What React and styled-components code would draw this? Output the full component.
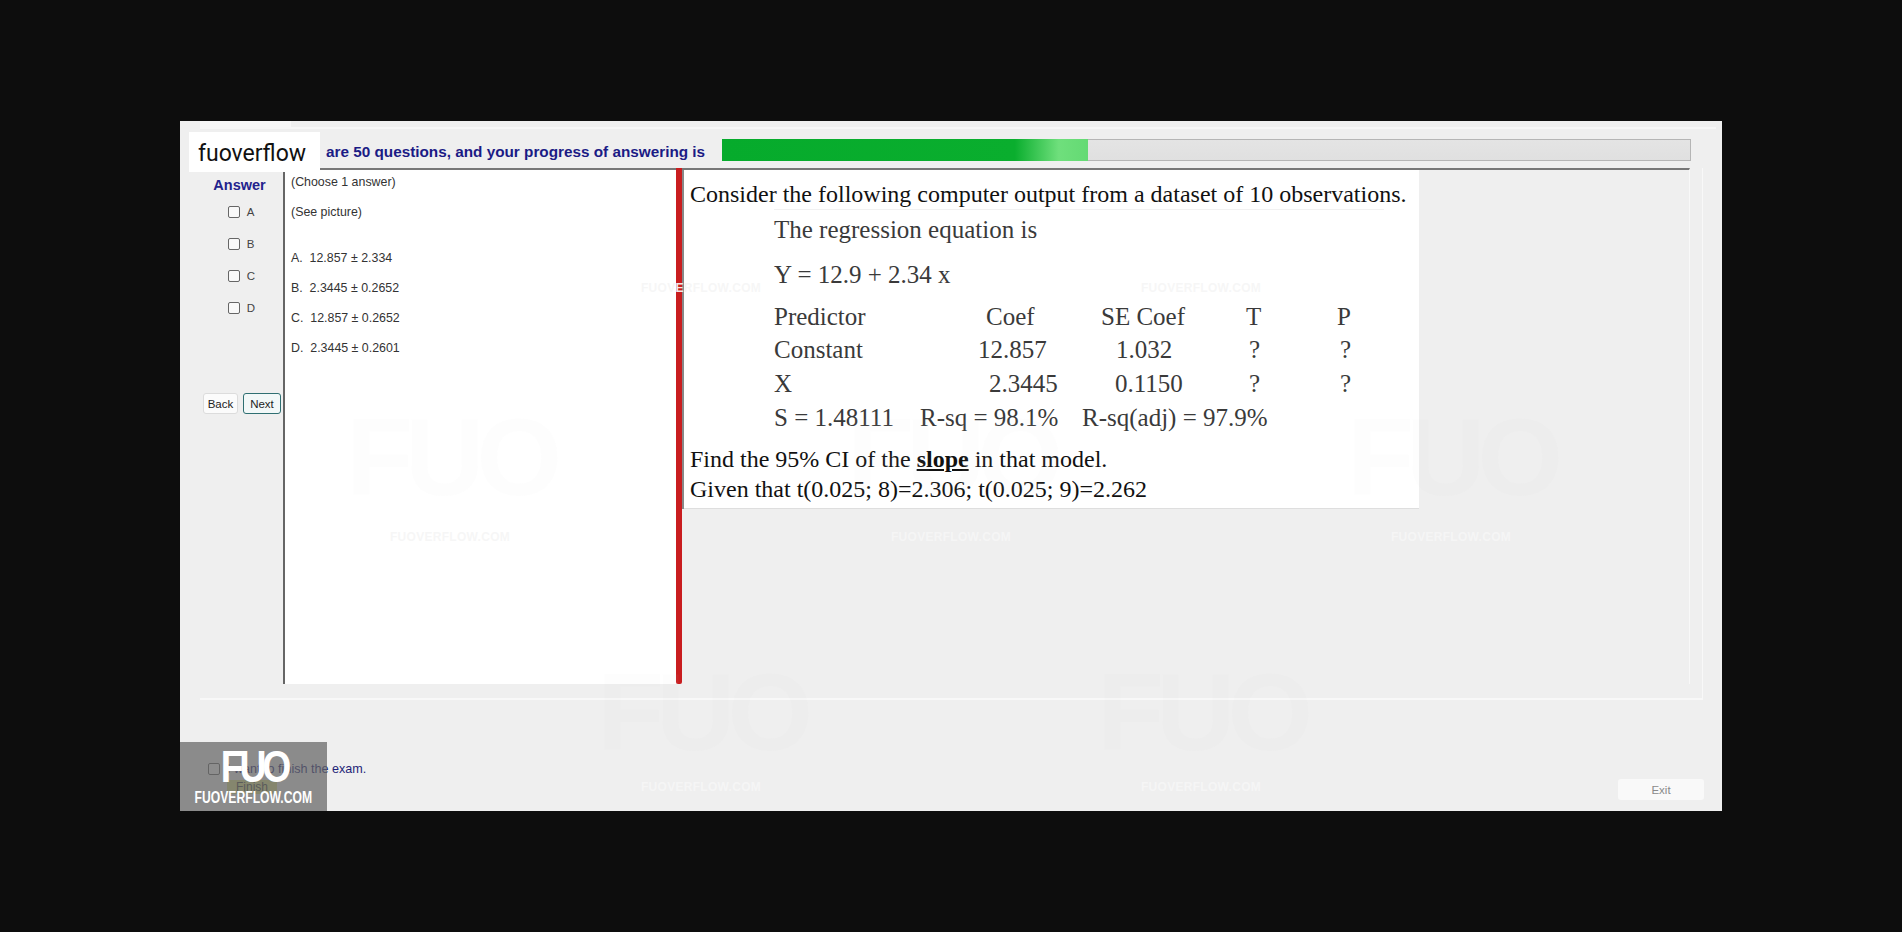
import React from "react";
import styled, { createGlobalStyle } from "styled-components";

const GlobalStyle = createGlobalStyle`
  html, body {
    margin: 0;
    padding: 0;
    background: #0d0d0d;
  }
`;

const Page = styled.div`
  width: 1902px;
  height: 932px;
  overflow: hidden;
  display: flex;
  align-items: center;
  justify-content: center;
  background: #0d0d0d;
  font-family: "Liberation Sans", Arial, sans-serif;
`;

const Window = styled.div`
  position: relative;
  width: 1542px;
  height: 690px;
  box-sizing: border-box;
  display: flex;
  flex-direction: column;
  background: #efefef;
  overflow: hidden;
`;

const TabStrip = styled.div`
  height: 8px;
  margin-left: 20px;
  flex-shrink: 0;
  display: flex;
  align-items: flex-end;
`;

const Tab = styled.div`
  width: 91px;
  height: 8px;
  background: #f7f7f7;
`;

const TabLine = styled.div`
  flex: 1;
  height: 2px;
  margin-right: 6px;
  background: #f7f7f7;
`;

const Header = styled.div`
  display: flex;
  align-items: center;
  height: 22px;
  margin-top: 10px;
  margin-right: 31px;
  padding-left: 146px;
`;

const HeaderText = styled.div`
  width: 396px;
  padding-top: 4px;
  font-size: 15.3px;
  font-weight: 700;
  color: #1b1b85;
  white-space: nowrap;
`;

const ProgressTrack = styled.div`
  flex: 1;
  height: 22px;
  box-sizing: border-box;
  border: 1px solid #b5b5b5;
  border-left: none;
  background: linear-gradient(#e4e4e4, #e0e0e0);
`;

const ProgressFill = styled.div`
  height: 22px;
  margin-top: -1px;
  background: linear-gradient(90deg, #06ab2c 0%, #0aae2e 80%, #6fdf7c 92%, #64da74 100%);
`;

const GroupBox = styled.div`
  display: flex;
  margin: 7px 19px 0 20px;
  padding-right: 12px;
  padding-bottom: 14px;
  height: 516px;
  border-right: 1px solid #f8f8f8;
  border-bottom: 2px solid #f8f8f8;
`;

const AnswerColumn = styled.div`
  width: 83px;
  flex-shrink: 0;
  display: flex;
  flex-direction: column;
  align-items: center;
`;

const AnswerTitle = styled.div`
  margin-top: 9px;
  margin-left: -4px;
  font-size: 14.5px;
  font-weight: 700;
  color: #23238d;
`;

const AnswerList = styled.div`
  margin-top: 13px;
  display: flex;
  flex-direction: column;
  gap: 20px;
`;

const AnswerOption = styled.label`
  display: flex;
  align-items: center;
  gap: 7px;
  height: 12px;
  font-size: 11.5px;
  color: #444;
`;

const CheckBox = styled.span`
  display: block;
  width: 12px;
  height: 12px;
  box-sizing: border-box;
  border: 1px solid #666;
  border-radius: 2px;
  background: #f8f8f8;
`;

const NavRow = styled.div`
  display: flex;
  gap: 5px;
  margin-top: 79px;
  margin-left: 1px;
`;

const NavButton = styled.div`
  width: ${(props) => (props.$primary ? "38px" : "35px")};
  height: 21px;
  box-sizing: border-box;
  display: flex;
  align-items: center;
  justify-content: center;
  font-size: 11.5px;
  color: #222;
  background: ${(props) => (props.$primary ? "#f2f8f8" : "#fbfbfb")};
  border: 1px solid ${(props) => (props.$primary ? "#2f6f72" : "#dcdcdc")};
  border-radius: 3px;
`;

const QuestionPanel = styled.div`
  width: 393px;
  flex-shrink: 0;
  box-sizing: border-box;
  padding: 4px 0 0 6px;
  background: #fff;
  border-left: 2px solid #666;
  border-top: 2px solid #777;
  font-size: 12.4px;
  color: #333;
`;

const QuestionLine = styled.div`
  height: 30px;
  line-height: 16px;
  white-space: pre;
  margin-bottom: ${(props) => (props.$gap ? "16px" : "0")};
`;

const Splitter = styled.div`
  width: 6px;
  flex-shrink: 0;
  background: #c91d1f;
  border-radius: 0 0 2px 2px;
`;

const ImagePane = styled.div`
  flex: 1;
  display: flex;
  align-items: flex-start;
  border-top: 2px solid #777;
  border-right: 1px solid #f8f8f8;
`;

const QuestionImage = styled.div`
  width: 735px;
  height: 339px;
  box-sizing: border-box;
  margin-left: 2px;
  padding: 9px 0 0 6px;
  background: #fff;
  border-bottom: 1px solid #dedede;
  box-shadow: -2px 0 0 #888;
  font-family: "Liberation Serif", "Times New Roman", serif;
  color: #111;
`;

const ImageLine = styled.div`
  font-size: 24px;
  line-height: 30px;
  white-space: nowrap;
`;

const Output = styled.div`
  margin: 0 0 9px 84px;
  padding-top: 3px;
  border-top: 1px solid #f1f1f1;
  width: 610px;
  color: #3a3a3a;
  font-size: 25px;
`;

const OutputLine = styled.div`
  line-height: 34px;
  height: ${(props) => props.$h || "34px"};
  white-space: nowrap;
`;

const OutputTable = styled.div`
  display: grid;
  grid-template-columns: 204px 123px 145px 91px 1fr;
  grid-auto-rows: 33.5px;
  align-items: center;
`;

const OutputCell = styled.div`
  padding-left: ${(props) => props.$inset || 0}px;
  white-space: nowrap;
`;

const FitRow = styled.div`
  display: grid;
  grid-template-columns: 146px 162px auto;
  height: 34px;
  align-items: center;
  white-space: nowrap;
`;

const Footer = styled.div`
  flex: 1;
  position: relative;
  display: flex;
  justify-content: space-between;
  margin: 0 18px 0 28px;
`;

const FinishColumn = styled.div`
  display: flex;
  flex-direction: column;
  padding-top: 61px;
`;

const FinishRow = styled.label`
  display: flex;
  align-items: center;
  gap: 7px;
  font-size: 12.6px;
  color: #1f1f78;
  height: 15px;
`;

const FinishButton = styled.div`
  width: 50px;
  height: 14px;
  margin: 4px 0 0 19px;
  font-size: 12px;
  text-align: center;
  color: #444;
  background: #d9dd8a;
`;

const ExitButton = styled.div`
  align-self: flex-start;
  width: 86px;
  height: 21px;
  margin-top: 79px;
  display: flex;
  align-items: center;
  justify-content: center;
  font-size: 11.5px;
  color: #8a8a8a;
  background: #f9f9f9;
  border-radius: 3px;
`;

const BrandBadge = styled.div`
  position: absolute;
  left: 9px;
  top: 11px;
  width: 131px;
  height: 40px;
  padding: 2px 0 0 9px;
  box-sizing: border-box;
  display: flex;
  align-items: center;
  background: #fff;
  font-family: Roboto, "Liberation Sans", sans-serif;
  font-size: 23px;
  color: #111;
`;

const CornerLogo = styled.div`
  position: absolute;
  left: 0;
  bottom: 0;
  width: 147px;
  height: 69px;
  display: flex;
  flex-direction: column;
  align-items: center;
  background: rgba(100, 100, 100, 0.72);
  color: #fff;
  font-weight: 700;
`;

const CornerMark = styled.div`
  margin-top: 3px;
  height: 44px;
  font-size: 44px;
  line-height: 44px;
  letter-spacing: -5px;
  transform: scaleX(0.85);
`;

const CornerName = styled.div`
  font-size: 16px;
  line-height: 18px;
  white-space: nowrap;
  transform: scaleX(0.76);
`;

const Watermark = styled.div`
  position: absolute;
  transform: translate(-50%, -50%);
  left: ${(props) => props.$x}px;
  top: ${(props) => props.$y}px;
  font-size: 12px;
  font-weight: 700;
  letter-spacing: 0.3px;
  color: rgba(246, 246, 246, 0.95);
  pointer-events: none;
  white-space: nowrap;
`;

const WatermarkGlyph = styled.div`
  position: absolute;
  transform: translate(-50%, -50%);
  left: ${(props) => props.$x}px;
  top: ${(props) => props.$y}px;
  font-size: 110px;
  font-weight: 700;
  letter-spacing: -8px;
  color: rgba(225, 225, 225, 0.05);
  pointer-events: none;
`;

const options = ["A", "B", "C", "D"];

const choices = [
  "A.  12.857 ± 2.334",
  "B.  2.3445 ± 0.2652",
  "C.  12.857 ± 0.2652",
  "D.  2.3445 ± 0.2601",
];

const rows = [
  [["Predictor"], ["Coef", 8], ["SE Coef"], ["T"], ["P"]],
  [["Constant"], ["12.857"], ["1.032", 15], ["?", 3], ["?", 3]],
  [["X"], ["2.3445", 11], ["0.1150", 14], ["?", 3], ["?", 3]],
];

// window-relative centres of the site's faint stamps
const stamps = [
  [521, 167],
  [1021, 167],
  [270, 416],
  [771, 416],
  [1271, 416],
  [521, 666],
  [1021, 666],
];

const glyphs = [
  [270, 335],
  [771, 335],
  [1271, 335],
  [521, 590],
  [1021, 590],
];

const App = () => {
  return (
    <Page>
      <GlobalStyle />
      <Window>
        <TabStrip>
          <Tab />
          <TabLine />
        </TabStrip>
        <Header>
          <HeaderText>are 50 questions, and your progress of answering is</HeaderText>
          <ProgressTrack>
            <ProgressFill style={{ width: `${(366 / 968) * 100}%` }} />
          </ProgressTrack>
        </Header>
        <GroupBox>
          <AnswerColumn>
            <AnswerTitle>Answer</AnswerTitle>
            <AnswerList>
              {options.map((option) => (
                <AnswerOption key={option}>
                  <CheckBox />
                  {option}
                </AnswerOption>
              ))}
            </AnswerList>
            <NavRow>
              <NavButton>Back</NavButton>
              <NavButton $primary>Next</NavButton>
            </NavRow>
          </AnswerColumn>
          <QuestionPanel>
            <QuestionLine>(Choose 1 answer)</QuestionLine>
            <QuestionLine $gap>(See picture)</QuestionLine>
            {choices.map((choice) => (
              <QuestionLine key={choice}>{choice}</QuestionLine>
            ))}
          </QuestionPanel>
          <Splitter />
          <ImagePane>
            <QuestionImage>
              <ImageLine>Consider the following computer output from a dataset of 10 observations.</ImageLine>
              <Output>
                <OutputLine $h="45px">The regression equation is</OutputLine>
                <OutputLine $h="42px">Y = 12.9 + 2.34 x</OutputLine>
                <OutputTable>
                  {rows.map((row) =>
                    row.map(([text, inset], i) => (
                      <OutputCell key={`${row[0][0]}-${i}`} $inset={inset}>
                        {text}
                      </OutputCell>
                    ))
                  )}
                </OutputTable>
                <FitRow>
                  <span>S = 1.48111</span>
                  <span>R-sq = 98.1%</span>
                  <span>R-sq(adj) = 97.9%</span>
                </FitRow>
              </Output>
              <ImageLine>
                Find the 95% CI of the{" "}
                <strong>
                  <u>slope</u>
                </strong>{" "}
                in that model.
              </ImageLine>
              <ImageLine>Given that t(0.025; 8)=2.306; t(0.025; 9)=2.262</ImageLine>
            </QuestionImage>
          </ImagePane>
        </GroupBox>
        <Footer>
          <FinishColumn>
            <FinishRow>
              <CheckBox />I want to finish the exam.
            </FinishRow>
            <FinishButton>Finish</FinishButton>
          </FinishColumn>
          <ExitButton>Exit</ExitButton>
        </Footer>
        {glyphs.map(([x, y]) => (
          <WatermarkGlyph key={`${x}-${y}`} $x={x} $y={y}>
            FUO
          </WatermarkGlyph>
        ))}
        {stamps.map(([x, y]) => (
          <Watermark key={`${x}-${y}`} $x={x} $y={y}>
            FUOVERFLOW.COM
          </Watermark>
        ))}
        <BrandBadge>fuoverflow</BrandBadge>
        <CornerLogo>
          <CornerMark>FUO</CornerMark>
          <CornerName>FUOVERFLOW.COM</CornerName>
        </CornerLogo>
      </Window>
    </Page>
  );
};

export default App;
